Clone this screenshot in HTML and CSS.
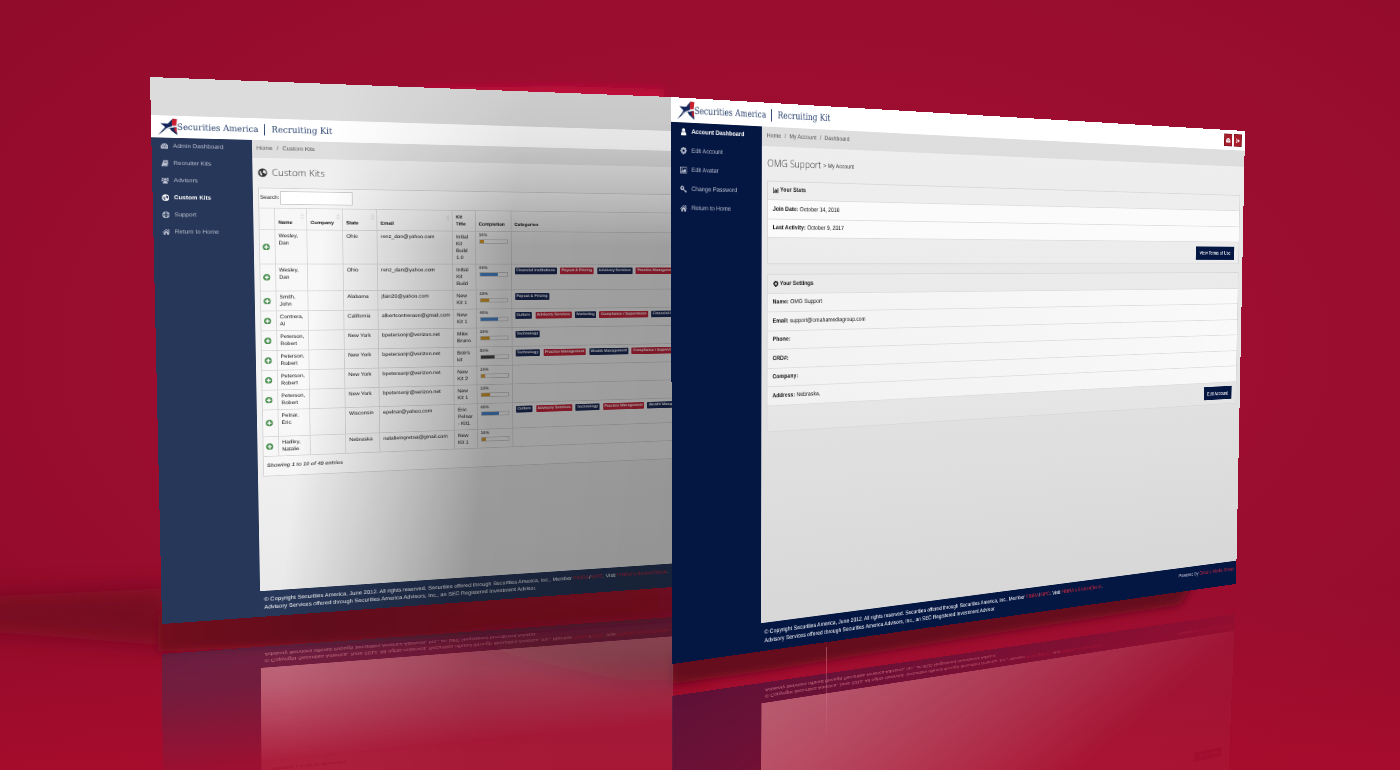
FILE: index.html
```html
<!DOCTYPE html>
<html lang="en">
<head>
    <meta charset="UTF-8">
    <meta name="viewport" content="width=device-width, initial-scale=1.0">
    <title>Securities America | Recruiting Kit</title>
    <link rel="stylesheet" href="styles.css">
</head>
<body>
    <!-- Icon set -->
    <svg class="sprite" aria-hidden="true">
        <symbol id="logo" viewBox="0 0 48 48">
            <path d="M1 47 L18 25 L7 15 L25 16 L37 2 L36 17 L33 29 L24 28 Z" fill="#14275a"/>
            <path d="M37 2 L47 4 L45 20 L36 22 L34 12 Z" fill="#c8202f"/>
            <path d="M30 28 L45 24 L47 46 L32 34 Z" fill="#14275a"/>
            <path d="M40 26 L45 25 L46 40 L41 36 Z" fill="#c8202f"/>
            <path d="M10 36 Q24 22 46 21 L46 25 Q28 25 14 34 Z" fill="#dfe3ea"/>
        </symbol>
        <symbol id="dash" viewBox="0 0 16 16">
            <path fill-rule="evenodd" d="M8 2a8 8 0 0 0-7 12h14A8 8 0 0 0 8 2zM3 8h2v2H3zM5 4.500h2v2H5zM9.500 4.500h2v2h-2zM11.500 8h2v2h-2zM7.500 7h1.200l.3 4.500H7z"/>
        </symbol>
        <symbol id="book" viewBox="0 0 16 16">
            <path fill-rule="evenodd" d="M5 1h10l-3 12H3.500v1H12l2.500-9 1 .5L13 15.500H3C1 15.500.5 14 1 12.500zM6.500 4l-.3 1h6l.3-1zM5.800 6.500l-.3 1h6l.3-1z"/>
        </symbol>
        <symbol id="group" viewBox="0 0 16 16">
            <circle cx="8" cy="5.500" r="3"/><circle cx="3" cy="3.500" r="2"/><circle cx="13" cy="3.500" r="2"/>
            <path d="M3 15c0-4 1-6 5-6s5 2 5 6zM0 10c0-3 1-4 4-4l1 2.500-2.500 1.500zM16 10c0-3-1-4-4-4l-1 2.500 2.500 1.500z"/>
        </symbol>
        <symbol id="globe" viewBox="0 0 16 16">
            <path fill-rule="evenodd" d="M8 .5a7.500 7.500 0 1 0 0 15 7.500 7.500 0 0 0 0-15zM9 2.500l4 2 .8 4-1.500 2-1.800-2-2-.5-.5-2 1.500-1.200zM3 5l3 .8-.5 2.500L7.500 10l-.5 3.500-2-1-1.200-3z"/>
        </symbol>
        <symbol id="ring" viewBox="0 0 16 16">
            <path fill-rule="evenodd" d="M8 .5a7.500 7.500 0 1 0 0 15 7.500 7.500 0 0 0 0-15zM6 2.500h4V5H6zM6 11h4v2.500H6zM2.500 6H5v4H2.500zM11 6h2.500v4H11zM8 5.500a2.500 2.500 0 1 1 0 5 2.500 2.500 0 0 1 0-5z"/>
        </symbol>
        <symbol id="home" viewBox="0 0 16 16">
            <path d="M8 1.500l8 6.800-1 1L8 3.500l-7 5.800-1-1zM11.500 2H14v3.500L11.500 3.500zM8 5l5.500 4.500V14.500h-4v-4h-3v4h-4V9.500z"/>
        </symbol>
        <symbol id="user" viewBox="0 0 16 16">
            <circle cx="8" cy="4" r="3.700"/><path d="M2 15.500c0-5 .8-7.500 3-8 2 1.500 4 1.500 6 0 2.200.5 3 3 3 8z"/>
        </symbol>
        <symbol id="gear" viewBox="0 0 16 16">
            <path fill-rule="evenodd" d="M6.500 0h3l.5 2.300 2-1.300 2 2-1.200 2 2.700.5v3l-2.700.5 1.200 2-2 2-2-1.200L9.500 15h-3L6 11.800l-2 1.200-2-2 1.200-2L.5 8.500v-3L3.200 5 2 3l2-2 2 1.300zM8 4.500a2.800 2.800 0 1 0 0 5.600 2.800 2.800 0 0 0 0-5.600z"/>
        </symbol>
        <symbol id="image" viewBox="0 0 16 16">
            <path fill-rule="evenodd" d="M0 1.500h16v13H0zM1.300 2.800v10.400h13.400V2.800z"/><circle cx="4.500" cy="5.500" r="1.500"/><path d="M2.500 12V10l2.500-2.500 2 2L11 5l2.500 3v4z"/>
        </symbol>
        <symbol id="key" viewBox="0 0 16 16">
            <path fill-rule="evenodd" d="M5 1a4.500 4.500 0 1 0 2.800 8L12 14.500l1.500-1 .8 1 1.200-1.200-2.300-3.300-1.200 1L9 7.500A4.500 4.500 0 0 0 5 1zM5 3.500a1.800 1.800 0 1 1 0 3.600 1.800 1.800 0 0 1 0-3.600z"/>
        </symbol>
        <symbol id="chart" viewBox="0 0 16 16">
            <path d="M0 1h1.300v12.700H16V15H0zM3 8h2v5H3zM6 4.500h2V13H6zM9 6.500h2V13H9zM12 2.500h2V13h-2z"/>
        </symbol>
        <symbol id="exit" viewBox="0 0 16 16">
            <path d="M6 2H2v12h4v-1.800H3.800V3.800H6zM10 3l5.500 5-5.500 5v-3.300H5.500V6.300H10z"/>
        </symbol>
        <symbol id="plus" viewBox="0 0 16 16">
            <path fill-rule="evenodd" d="M8 0a8 8 0 1 0 0 16A8 8 0 0 0 8 0zM6.500 3.500h3v3h3v3h-3v3h-3v-3h-3v-3h3z"/>
        </symbol>
        <symbol id="sort" viewBox="0 0 10 16">
            <path d="M5 1l4 5H1zM5 15l4-5H1z" fill="none" stroke="currentColor"/>
        </symbol>
    </svg>

    <main class="stage" id="stage">
        <!-- Floor light and shadows -->
        <svg class="backdrop" viewBox="0 0 1400 770" preserveAspectRatio="none" aria-hidden="true">
            <defs>
                <filter id="soft" filterUnits="userSpaceOnUse" x="-100" y="0" width="1600" height="900"><feGaussianBlur stdDeviation="12"/></filter>
                <filter id="tight" filterUnits="userSpaceOnUse" x="-100" y="0" width="1600" height="900"><feGaussianBlur stdDeviation="4"/></filter>
                <linearGradient id="floor" x1="0" y1="0" x2="0" y2="1">
                    <stop offset="0" stop-color="#b00d2e" stop-opacity="0"/>
                    <stop offset="1" stop-color="#b40c2e" stop-opacity=".6"/>
                </linearGradient>
                <linearGradient id="under" x1="0" y1="0" x2="1" y2="0">
                    <stop offset="0" stop-color="#72091f"/>
                    <stop offset=".3" stop-color="#62091a"/>
                    <stop offset="1" stop-color="#6d0b20"/>
                </linearGradient>
            </defs>
            <rect x="0" y="590" width="1400" height="180" fill="url(#floor)"/>
            <polygon points="-60,598 170,588 170,646 -60,628" fill="#6a081d" opacity=".75" filter="url(#soft)"/>
            <polygon points="420,88 560,86 664,89 664,110 420,110" fill="#c00d3a" filter="url(#tight)"/>
            <polygon points="158,615 680,575 680,620 420,640 158,652" fill="url(#under)" filter="url(#tight)"/>
            <polygon points="440,640 700,620 700,680 620,680" fill="#6a0a1e" opacity=".7" filter="url(#soft)"/>
            <polygon points="672,650 1200,575 1180,605 980,636 760,672 672,684" fill="#65091d" filter="url(#tight)"/>
        </svg>

        <!-- Custom kits window -->
        <section class="page page-kits" id="kits">
            <div class="strip"></div>
            <header class="topbar">
                <svg class="logo"><use href="#logo"/></svg>
                <span class="brand">Securities America</span>
                <span class="brand brand-sub">Recruiting Kit</span>
            </header>
            <div class="columns">
                <nav class="sidebar">
                    <a href="#"><svg><use href="#dash"/></svg>Admin Dashboard</a>
                    <a href="#"><svg><use href="#book"/></svg>Recruiter Kits</a>
                    <a href="#"><svg><use href="#group"/></svg>Advisors</a>
                    <a href="#" class="active"><svg><use href="#globe"/></svg>Custom Kits</a>
                    <a href="#"><svg><use href="#ring"/></svg>Support</a>
                    <a href="#"><svg><use href="#home"/></svg>Return to Home</a>
                </nav>
                <div class="content">
                    <div class="breadcrumb"><a href="#">Home</a><span>/</span><a href="#">Custom Kits</a></div>
                    <div class="inner">
                        <h1><svg><use href="#globe"/></svg>Custom Kits</h1>
                        <div class="kits-panel">
                            <label class="search">Search: <input type="text"></label>
                            <table>
                                <colgroup>
                                    <col class="c-add"><col class="c-name"><col class="c-company"><col class="c-state">
                                    <col class="c-email"><col class="c-title"><col class="c-done"><col>
                                </colgroup>
                                <thead>
                                    <tr>
                                        <th></th>
                                        <th>Name<svg><use href="#sort"/></svg></th>
                                        <th>Company<svg><use href="#sort"/></svg></th>
                                        <th>State<svg><use href="#sort"/></svg></th>
                                        <th>Email<svg><use href="#sort"/></svg></th>
                                        <th>Kit<br>Title</th>
                                        <th>Completion</th>
                                        <th>Categories</th>
                                    </tr>
                                </thead>
                                <tbody>
                                    <tr>
                                        <td class="add"><svg><use href="#plus"/></svg></td>
                                        <td>Wesley, Dan</td><td></td><td>Ohio</td><td>renz_dan@yahoo.com</td><td>Initial Kit Build 1.0</td>
                                        <td class="done">16%<div class="bar low"><i style="width:16%"></i></div></td>
                                        <td></td>
                                    </tr>
                                    <tr>
                                        <td class="add"><svg><use href="#plus"/></svg></td>
                                        <td>Wesley, Dan</td><td></td><td>Ohio</td><td>renz_dan@yahoo.com</td><td>Initial Kit Build</td>
                                        <td class="done">66%<div class="bar high"><i style="width:66%"></i></div></td>
                                        <td class="tags"><span>Financial Institutions</span><span>Payout &amp; Pricing</span><span>Advisory Services</span><span>Practice Management</span></td>
                                    </tr>
                                    <tr>
                                        <td class="add"><svg><use href="#plus"/></svg></td>
                                        <td>Smith, John</td><td></td><td>Alabama</td><td>jfain20@yahoo.com</td><td>New Kit 1</td>
                                        <td class="done">33%<div class="bar low"><i style="width:33%"></i></div></td>
                                        <td class="tags"><span>Payout &amp; Pricing</span></td>
                                    </tr>
                                    <tr>
                                        <td class="add"><svg><use href="#plus"/></svg></td>
                                        <td>Contrera, Al</td><td></td><td>California</td><td>albertcontreraon@gmail.com</td><td>New Kit 1</td>
                                        <td class="done">66%<div class="bar high"><i style="width:66%"></i></div></td>
                                        <td class="tags"><span>Culture</span><span>Advisory Services</span><span>Marketing</span><span>Compliance / Supervision</span><span>Financial Institutions</span></td>
                                    </tr>
                                    <tr>
                                        <td class="add"><svg><use href="#plus"/></svg></td>
                                        <td>Peterson, Robert</td><td></td><td>New York</td><td>bpetersonjr@verizon.net</td><td>Mike Bruno</td>
                                        <td class="done">33%<div class="bar low"><i style="width:33%"></i></div></td>
                                        <td class="tags"><span>Technology</span></td>
                                    </tr>
                                    <tr>
                                        <td class="add"><svg><use href="#plus"/></svg></td>
                                        <td>Peterson, Robert</td><td></td><td>New York</td><td>bpetersonjr@verizon.net</td><td>Bob's kit</td>
                                        <td class="done">50%<div class="bar mid"><i style="width:50%"></i></div></td>
                                        <td class="tags"><span>Technology</span><span>Practice Management</span><span>Wealth Management</span><span>Compliance / Supervision</span></td>
                                    </tr>
                                    <tr>
                                        <td class="add"><svg><use href="#plus"/></svg></td>
                                        <td>Peterson, Robert</td><td></td><td>New York</td><td>bpetersonjr@verizon.net</td><td>New Kit 2</td>
                                        <td class="done">16%<div class="bar low"><i style="width:16%"></i></div></td>
                                        <td></td>
                                    </tr>
                                    <tr>
                                        <td class="add"><svg><use href="#plus"/></svg></td>
                                        <td>Peterson, Robert</td><td></td><td>New York</td><td>bpetersonjr@verizon.net</td><td>New Kit 1</td>
                                        <td class="done">33%<div class="bar low"><i style="width:33%"></i></div></td>
                                        <td></td>
                                    </tr>
                                    <tr>
                                        <td class="add"><svg><use href="#plus"/></svg></td>
                                        <td>Pelnar, Eric</td><td></td><td>Wisconsin</td><td>epelnar@yahoo.com</td><td>Eric Pelnar - Kit1</td>
                                        <td class="done">66%<div class="bar high"><i style="width:66%"></i></div></td>
                                        <td class="tags"><span>Culture</span><span>Advisory Services</span><span>Technology</span><span>Practice Management</span><span>Wealth Management</span></td>
                                    </tr>
                                    <tr>
                                        <td class="add"><svg><use href="#plus"/></svg></td>
                                        <td>Hadley, Natalie</td><td></td><td>Nebraska</td><td>natalieingretna@gmail.com</td><td>New Kit 1</td>
                                        <td class="done">16%<div class="bar low"><i style="width:16%"></i></div></td>
                                        <td></td>
                                    </tr>
                                </tbody>
                            </table>
                            <p class="count">Showing 1 to 10 of 49 entries</p>
                        </div>
                    </div>
                    <footer class="foot">
                        <p>© Copyright Securities America, June 2012. All rights reserved. Securities offered through Securities America, Inc., Member <a href="#">FINRA</a>/<a href="#">SIPC</a>. Visit <a href="#">FINRA's BrokerCheck</a>.<br>Advisory Services offered through Securities America Advisors, Inc., an SEC Registered Investment Advisor.</p>
                    </footer>
                </div>
            </div>
        </section>

        <!-- Account window -->
        <section class="page page-account" id="account">
            <header class="topbar">
                <svg class="logo"><use href="#logo"/></svg>
                <span class="brand">Securities America</span>
                <span class="brand brand-sub">Recruiting Kit</span>
                <div class="actions">
                    <button type="button" aria-label="Dashboard"><svg><use href="#dash"/></svg></button>
                    <button type="button" aria-label="Log out"><svg><use href="#exit"/></svg></button>
                </div>
            </header>
            <div class="columns">
                <nav class="sidebar">
                    <a href="#" class="active"><svg><use href="#user"/></svg>Account Dashboard</a>
                    <a href="#"><svg><use href="#gear"/></svg>Edit Account</a>
                    <a href="#"><svg><use href="#image"/></svg>Edit Avatar</a>
                    <a href="#"><svg><use href="#key"/></svg>Change Password</a>
                    <a href="#"><svg><use href="#home"/></svg>Return to Home</a>
                </nav>
                <div class="content">
                    <div class="breadcrumb"><a href="#">Home</a><span>/</span><a href="#">My Account</a><span>/</span><a href="#">Dashboard</a></div>
                    <div class="inner">
                        <h1>OMG Support <small>&gt; My Account</small></h1>
                        <div class="panel">
                            <h2><svg><use href="#chart"/></svg>Your Stats</h2>
                            <ul>
                                <li><b>Join Date:</b> October 14, 2016</li>
                                <li><b>Last Activity:</b> October 9, 2017</li>
                            </ul>
                            <div class="panel-foot"><button type="button">View Terms of Use</button></div>
                        </div>
                        <div class="panel">
                            <h2><svg><use href="#gear"/></svg>Your Settings</h2>
                            <ul>
                                <li><b>Name:</b> OMG Support</li>
                                <li><b>Email:</b> support@omahamediagroup.com</li>
                                <li><b>Phone:</b></li>
                                <li><b>CRD#:</b></li>
                                <li><b>Company:</b></li>
                                <li><b>Address:</b> Nebraska,</li>
                            </ul>
                            <div class="panel-foot"><button type="button">Edit Account</button></div>
                        </div>
                    </div>
                    <footer class="foot">
                        <p>© Copyright Securities America, June 2012. All rights reserved. Securities offered through Securities America, Inc., Member <a href="#">FINRA</a>/<a href="#">SIPC</a>. Visit <a href="#">FINRA's BrokerCheck</a>.<br>Advisory Services offered through Securities America Advisors, Inc., an SEC Registered Investment Advisor.</p>
                        <p class="powered">Powered by <a href="#">Omaha Media Group</a></p>
                    </footer>
                </div>
            </div>
        </section>
        <div class="seam"></div>
    </main>
    <script src="script.js"></script>
</body>
</html>
```
FILE: styles.css
```css
body {
    margin: 0;
    background-color: #970d2d;
    font-family: "Liberation Sans", Arial, sans-serif;
    overflow-x: hidden;
}
.sprite {
    position: absolute;
    width: 0;
    height: 0;
}
svg {
    fill: currentColor;
}
a {
    color: inherit;
    text-decoration: none;
}
.stage {
    position: relative;
    width: 100%;
    aspect-ratio: 1400 / 770;
    overflow: hidden;
    background: radial-gradient(ellipse at 55% 45%, #a30e32 0%, #9a0d2f 60%, #8e0b29 100%);
}
.backdrop {
    position: absolute;
    width: 100%;
    height: 100%;
}

/* Windows in perspective, corners are set in script.js */
.page {
    position: absolute;
    top: 0;
    left: 0;
    display: flex;
    flex-direction: column;
    overflow: hidden;
    transform-origin: 0 0;
    color: #111;
    font-size: 14px;
    text-rendering: geometricPrecision;
}
.page > * {
    zoom: 0.5;
}
.page-kits {
    width: 635px;
    height: 675px;
    background-color: #e2e2e2;
}
.page-account {
    width: 875px;
    height: 630px;
    background-color: #e2e2e2;
}
.page-kits::after {
    content: "";
    position: absolute;
    inset: 0;
    background: linear-gradient(97deg, rgba(0, 0, 0, 0) 30%, rgba(0, 0, 0, 0.17) 46%, rgba(0, 0, 0, 0.35) 62%, rgba(0, 0, 0, 0.37) 100%);
    -webkit-mask-image: linear-gradient(to bottom, rgba(0, 0, 0, 0.2) 0, rgba(0, 0, 0, 0.3) 10%, #000 30%);
    mask-image: linear-gradient(to bottom, rgba(0, 0, 0, 0.2) 0, rgba(0, 0, 0, 0.3) 10%, #000 30%);
    pointer-events: none;
}

/* Mirrored copies fade out towards the front of the floor */
.reflection-kits {
    -webkit-mask-image: linear-gradient(to top, rgba(0, 0, 0, 0.42) 0, rgba(0, 0, 0, 0.36) 9%, rgba(0, 0, 0, 0.08) 27%);
    mask-image: linear-gradient(to top, rgba(0, 0, 0, 0.42) 0, rgba(0, 0, 0, 0.36) 9%, rgba(0, 0, 0, 0.08) 27%);
}
.reflection-account {
    -webkit-mask-image: linear-gradient(to top right, rgba(0, 0, 0, 0.44) 0, rgba(0, 0, 0, 0.32) 18%, rgba(0, 0, 0, 0.03) 54%);
    mask-image: linear-gradient(to top right, rgba(0, 0, 0, 0.44) 0, rgba(0, 0, 0, 0.32) 18%, rgba(0, 0, 0, 0.03) 54%);
}
.reflection .topbar,
.reflection .sidebar a,
.reflection .breadcrumb,
.reflection h1,
.reflection .search,
.reflection table,
.reflection .panel {
    visibility: hidden;
}
.reflection .panel + .panel .panel-foot {
    visibility: visible;
}

.strip {
    height: 92px;
    background-color: #dcdcdc;
}
.topbar {
    display: flex;
    align-items: center;
    box-sizing: border-box;
    height: 54px;
    padding: 0 12px 0 13px;
    background-color: #fff;
}
.logo {
    width: 44px;
    height: 46px;
}
.brand {
    color: #2b4470;
    font-family: "DejaVu Serif Condensed", "DejaVu Serif", serif;
    font-size: 21px;
    line-height: 28px;
    white-space: nowrap;
}
.brand-sub {
    margin-left: 12px;
    padding-left: 16px;
    border-left: 2px solid #2b4470;
    font-size: 22px;
}
.actions {
    display: flex;
    gap: 6px;
    margin-left: auto;
}
.actions button {
    width: 30px;
    height: 34px;
    padding: 0;
    border: 1px solid #7f1420;
    background-color: #a91e2c;
    color: #fff;
}
.actions svg {
    width: 18px;
    height: 16px;
    vertical-align: middle;
}
.columns {
    display: flex;
    flex: 1;
}
.sidebar {
    width: 227px;
    flex-shrink: 0;
    background-color: #041642;
    color: #b9bfce;
}
.page-kits .sidebar {
    width: 223px;
}
.page-kits .sidebar,
.page-kits .foot {
    background-color: #273759;
}
.sidebar a {
    display: flex;
    align-items: center;
    gap: 11px;
    height: 42px;
    padding-left: 22px;
}
.page-kits .sidebar a {
    padding-left: 19px;
}
.sidebar svg {
    width: 17px;
    height: 17px;
}
.sidebar .active {
    color: #fff;
    font-weight: bold;
}
.content {
    display: flex;
    flex-direction: column;
    flex: 1;
    min-width: 0;
    background: linear-gradient(to bottom, #efefef, #d6d6d6);
}
.page-kits .content {
    background: linear-gradient(to bottom, #efefef, #f4f4f4 50%, #e8e8e8);
}
.breadcrumb {
    height: 43px;
    padding-left: 14px;
    background-color: rgba(0, 0, 0, 0.07);
    color: #555;
    line-height: 43px;
}
.page-kits .breadcrumb {
    padding-left: 11px;
}
.breadcrumb span {
    padding: 0 9px;
}
.inner {
    flex: 1;
    padding: 0 15px;
}
.page-kits .inner {
    padding: 0 0 0 13px;
}
h1 {
    display: flex;
    align-items: center;
    margin: 0;
    height: 78px;
    box-sizing: border-box;
    color: #333;
    font-family: "Open Sans", sans-serif;
    font-size: 23px;
    font-weight: 300;
}
.page-kits h1 {
    height: 74px;
}
h1 svg {
    width: 22px;
    height: 22px;
    margin-right: 10px;
}
h1 small {
    padding: 6px 0 0 6px;
    font-family: "Liberation Sans", Arial, sans-serif;
    font-size: 14px;
}

/* Kits table */
.kits-panel {
    border: 1px solid #d5d5d5;
    border-right: 0;
    background-color: rgba(255, 255, 255, 0.45);
}
.search {
    display: flex;
    align-items: center;
    gap: 1px;
    height: 49px;
    padding-left: 2px;
    font-size: 13px;
}
.search input {
    box-sizing: border-box;
    width: 170px;
    height: 34px;
    border: 1px solid #ccc;
    background-color: #fff;
}
table {
    width: 100%;
    table-layout: fixed;
    border-collapse: collapse;
    font-size: 13px;
    line-height: 18px;
}
.c-add {
    width: 34px;
}
.c-name {
    width: 75px;
}
.c-company {
    width: 84px;
}
.c-state {
    width: 82px;
}
.c-email {
    width: 184px;
}
.c-title {
    width: 57px;
}
.c-done {
    width: 90px;
}
th,
td {
    padding: 6px 10px 6px 8px;
    border: 1px solid #d8d8d8;
    text-align: left;
    vertical-align: top;
}
th:first-child,
td:first-child {
    border-left: 0;
}
th {
    position: relative;
    padding: 10px 0 6px 8px;
    font-size: 12px;
    vertical-align: bottom;
}
th svg {
    position: absolute;
    top: 12px;
    right: 4px;
    width: 10px;
    height: 14px;
    color: #ccc;
}
td:nth-child(5) {
    padding-right: 0;
}
.add {
    padding: 6px 0 6px 6px;
    color: #4c9152;
    vertical-align: middle;
}
.add svg {
    width: 17px;
    height: 17px;
    vertical-align: middle;
}
.done {
    padding: 2px 8px;
    font-size: 11px;
}
.bar {
    height: 8px;
    border: 1px solid #c9c9c9;
}
.bar i {
    display: block;
    height: 8px;
    background-color: #d39a2b;
}
.high i {
    background-color: #4a86cb;
}
.mid i {
    background-color: #444;
}
.tags {
    padding-right: 0;
    overflow: hidden;
    white-space: nowrap;
}
.tags span {
    display: inline-block;
    margin-right: 9px;
    padding: 0 4px;
    border-radius: 2px;
    background-color: #1d2c58;
    color: #fff;
    font-size: 10px;
    font-weight: bold;
}
.tags span:nth-child(even) {
    background-color: #c9263d;
}
.count {
    margin: 0;
    padding-left: 7px;
    color: #555;
    font-size: 13px;
    font-style: italic;
    font-weight: bold;
    line-height: 48px;
}

/* Account panels */
.panel {
    margin-bottom: 22px;
    border: 1px solid #d8d8d8;
    background-color: rgba(255, 255, 255, 0.15);
    box-sizing: border-box;
}
.panel h2,
.panel li {
    display: flex;
    align-items: center;
    gap: 4px;
    box-sizing: border-box;
    height: 43px;
    margin: 0;
    padding-left: 13px;
    border-bottom: 1px solid #dedede;
    font-size: 14px;
    font-weight: normal;
    color: #111;
}
.panel h2 {
    font-weight: bold;
}
.panel h2 svg {
    width: 15px;
    height: 15px;
}
.panel ul {
    margin: 0;
    padding: 0;
    list-style: none;
    background-color: rgba(255, 255, 255, 0.75);
}
.panel + .panel ul {
    background: linear-gradient(to right, rgba(255, 255, 255, 0.45), rgba(255, 255, 255, 0.75));
}
.panel-foot {
    padding: 11px 16px;
    text-align: right;
}
.panel-foot button {
    height: 36px;
    padding: 0 13px;
    border: 0;
    background-color: #041642;
    color: #fff;
    font-family: inherit;
    font-size: 14px;
}

.foot {
    display: flex;
    justify-content: space-between;
    padding: 13px 10px;
    background-color: #041642;
    color: #fff;
    line-height: 20px;
    white-space: nowrap;
}
.foot p {
    margin: 0;
}
.foot a {
    color: #c8283c;
}
.foot .powered {
    color: #ccd;
}
.seam {
    position: absolute;
    top: 84%;
    left: 59%;
    width: 1px;
    height: 13%;
    background: linear-gradient(to bottom, rgba(255, 160, 180, 0.4), rgba(255, 160, 180, 0));
}
```
FILE: script.js
```javascript
// Corners of every window on the 1400 x 770 stage: top left, top right, bottom right, bottom left
const windows = {
    "kits": {
        corners: [[150, 77], [672, 97], [673, 587], [162, 624]],
        reflection: [[165, 1092], [673, 1009], [673, 617], [162, 654]]
    },
    "account": {
        corners: [[671, 97], [1245, 131], [1236, 584], [672, 664]],
        reflection: [[672, 1087], [1222, 927], [1235, 614], [672, 696]]
    }
};

const stage = document.getElementById('stage');

// Projects a flat w x h element on four corners
function project(element, corners) {
    const scale = stage.clientWidth / 1400;
    const w = element.offsetWidth;
    const h = element.offsetHeight;
    const [[x0, y0], [x1, y1], [x2, y2], [x3, y3]] = corners.map(c => [c[0] * scale, c[1] * scale]);

    const dx1 = x1 - x2, dx2 = x3 - x2, sx = x0 - x1 + x2 - x3;
    const dy1 = y1 - y2, dy2 = y3 - y2, sy = y0 - y1 + y2 - y3;
    const det = dx1 * dy2 - dx2 * dy1;
    const g = (sx * dy2 - dx2 * sy) / det;
    const k = (dx1 * sy - sx * dy1) / det;

    element.style.transform = `matrix3d(
        ${(x1 - x0 + g * x1) / w}, ${(y1 - y0 + g * y1) / w}, 0, ${g / w},
        ${(x3 - x0 + k * x3) / h}, ${(y3 - y0 + k * y3) / h}, 0, ${k / h},
        0, 0, 1, 0,
        ${x0}, ${y0}, 0, 1)`;
}

// Add a mirrored copy under each window
for (const name in windows) {
    const page = document.getElementById(name);
    const copy = page.cloneNode(true);
    copy.removeAttribute('id');
    copy.classList.add('reflection', 'reflection-' + name);
    copy.setAttribute('aria-hidden', 'true');
    copy.inert = true;
    page.before(copy);
    windows[name].page = page;
    windows[name].copy = copy;
}

function layout() {
    for (const name in windows) {
        project(windows[name].page, windows[name].corners);
        project(windows[name].copy, windows[name].reflection);
    }
}

layout();
window.addEventListener('resize', layout);
```
